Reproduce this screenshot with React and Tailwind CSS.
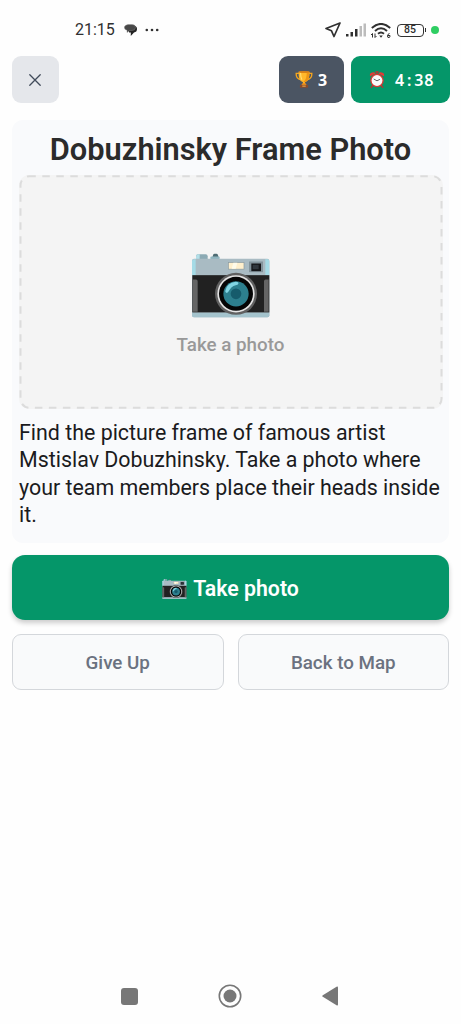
import React from 'react';
import clsx from 'clsx';

const CameraIcon = ({ className }) => (
  <svg viewBox="36 40 234 194" className={className} aria-hidden="true">
    <path d="M48 58v-9q0-6 6-6h23q6 0 6 6v9z" fill="#8caab4" />
    <path d="M48 50q0-7 7-7h4v15H48z" fill="#b3dfe8" />
    <path d="M96 56l3-10q1-4 5-4h5q4 0 5 4l3 10z" fill="#4d6b72" />
    <rect x="91" y="50" width="28" height="8" rx="3" fill="#8fb5bf" />
    <rect x="36" y="57" width="232" height="175" rx="6" fill="#a9bbc3" />
    <path d="M42 58h5v48H36V64q0-6 6-6zM262 58h-6v48h12V64q0-6-6-6z" fill="#a5dbe6" />
    <rect x="37" y="106" width="231" height="112" fill="#212121" />
    <path d="M36 219h232v8q0 5-5 5H41q-5 0-5-5z" fill="#a4c3cc" />
    <path d="M38 119h10q5 0 5 5v92H38zM266 119h-9q-5 0-5 5v92h14z" fill="#656565" />
    <rect x="145" y="68" width="47" height="20" fill="#fff0cd" stroke="#8a9aa0" strokeWidth="2" />
    <path d="M160 69h12l-5 18h-12z" fill="#fffbea" />
    <rect x="207" y="65" width="42" height="32" fill="#82939b" />
    <rect x="214" y="71" width="29" height="23" fill="#15171a" />
    <path d="M218 75h18v13h-18z" fill="#30373d" />
    <circle cx="168" cy="162" r="63" fill="#606060" />
    <circle cx="168" cy="162" r="56" fill="#e4e4e4" />
    <circle cx="168" cy="162" r="51" fill="#050505" />
    <circle cx="168" cy="162" r="38" fill="#2d7f8e" />
    <circle cx="168" cy="162" r="16" fill="#165b6c" />
    <path d="M136 153q5-24 31-27 10 0 8 6-1 4-8 4-14 4-20 17-3 7-8 6-4-1-3-6z" fill="#81d4e2" />
  </svg>
);

const TrophyIcon = () => (
  <svg viewBox="0 0 52 50" className="h-[17px] w-[18px] shrink-0" aria-hidden="true">
    <path d="M11 7H3q-1 16 14 19M41 7h8q1 16-14 19" fill="none" stroke="#f5a51d" strokeWidth="4" />
    <path d="M10 2h32q1 27-13 31v9h-6v-9Q9 29 10 2z" fill="#ffb82a" />
    <path d="M34 3h8q1 25-13 30-3 0-5-1 11-7 10-29z" fill="#ec9514" />
    <path d="M16 6q0 14 4 20" fill="none" stroke="#ffe27a" strokeWidth="3" />
    <ellipse cx="26" cy="3" rx="16" ry="3" fill="#d98216" />
    <path d="M21 36h10l3 6H18z" fill="#e88b1b" />
    <path d="M14 41h24v8H14z" fill="#8c4a28" />
    <path d="M21 43h10v3H21z" fill="#f0b24c" />
  </svg>
);

const AlarmClockIcon = () => (
  <svg viewBox="0 0 48 52" className="h-[17px] w-4 shrink-0" aria-hidden="true">
    <path d="M11 43l-4 7M37 43l4 7" stroke="#a83b35" strokeWidth="5" strokeLinecap="round" />
    <path d="M19 1h10v4H19zM22 3h4v7h-4z" fill="#bd3430" />
    <path d="M3 16Q0 8 7 5q8-4 13 3zM45 16q3-8-4-11-8-4-13 3z" fill="#e33a36" />
    <circle cx="24" cy="29" r="20.5" fill="#d83934" />
    <circle cx="24" cy="29" r="16.5" fill="#fafafa" />
    <path d="M15 25l9 5 8-4" fill="none" stroke="#424242" strokeWidth="2.5" strokeLinecap="round" strokeLinejoin="round" />
  </svg>
);

const StatusBar = () => (
  <div className="flex h-14 items-center pt-1 pr-[22px] pl-[75px] text-[#303030]">
    <span className="w-10 text-base leading-5">21:15</span>
    <svg viewBox="0 0 13 12" className="ml-[9px] h-3 w-[13px]" aria-hidden="true">
      <path d="M5 1.500h4q4 0 4 3.500 0 3-3 3.500L6.800 12V8.500H5z" fill="#222" />
      <path d="M4 .5h4Q11.500.5 11.500 3.500T8 6.500L5.500 6.700 3 8.500V6.300Q.3 5.700.3 3.500T4 .5z" fill="#484848" stroke="#8a8a8a" strokeWidth=".4" />
    </svg>
    <svg viewBox="0 0 15 4" className="ml-[8px] h-1 w-[15px]" fill="currentColor" aria-hidden="true">
      <circle cx="1.800" cy="2" r="1.300" />
      <circle cx="7" cy="2" r="1.300" />
      <circle cx="12.200" cy="2" r="1.300" />
    </svg>

    <div className="ml-auto flex items-center">
      {/* Location arrow */}
      <svg viewBox="0 0 16 16" className="h-4 w-4" fill="none" stroke="currentColor" strokeWidth="1.700" strokeLinejoin="round" aria-hidden="true">
        <path d="M15 1L1 6.500 6.500 8.800 9 14.500z" />
      </svg>
      {/* Mobile signal */}
      <svg viewBox="0 0 20 14" className="ml-[5px] h-3.5 w-5" aria-hidden="true">
        <path d="M0 11h2.500v2.500H0zM4.500 9H7v4.500H4.500zM9 6h2.500v7.500H9z" fill="#303030" />
        <path d="M13.500 3H16v10.500h-2.500zM17.500 0.500H20v13h-2.500z" fill="#bcbcbc" />
      </svg>
      {/* Wi-Fi 6 with data arrows */}
      <svg viewBox="0 0 20 15" className="ml-[5px] h-[15px] w-5" fill="none" stroke="currentColor" strokeWidth="1.900" aria-hidden="true">
        <path d="M.8 5Q10-3.200 19.200 5M4 8q6-5.500 12 0M7 10.800q3-2.600 6 0" />
        <path d="M8.200 12.500h3.600L10 14.800z" fill="currentColor" stroke="none" />
        <path d="M1.500 14.500v-4L0 12M4 10.500v4L5.500 13M18.500 10.500q-2 .5-2 2.500t1.500 1.500 1-2h-2" strokeWidth="1" />
      </svg>
      <div className="ml-[6px] flex h-[13px] w-[27px] items-center justify-center rounded-[4px] border border-[#303030]">
        <span className="pt-px text-[10.5px] leading-none font-medium">85</span>
      </div>
      <span className="ml-px h-1 w-[1.5px] bg-[#303030]" />
      <span className="ml-[5px] h-2 w-2 rounded-full bg-[#2fce63]" />
    </div>
  </div>
);

const Badge = ({ className, children }) => (
  <div className={clsx('flex h-[47px] items-center rounded-[9px] text-base text-white', className)}>
    {children}
  </div>
);

const Header = () => (
  <header className="flex items-start justify-between pr-[11px] pl-3">
    <button type="button" aria-label="Close" className="flex h-[47px] w-[47px] items-center justify-center rounded-[9px] bg-[#e5e7eb] pt-px pr-px text-[#414b5a]">
      <svg viewBox="0 0 12 12" className="h-3 w-3" fill="none" stroke="currentColor" strokeWidth="1.300" strokeLinecap="round" aria-hidden="true">
        <path d="M.8.800l10.400 10.400M11.200.800L.8 11.200" />
      </svg>
    </button>
    <div className="flex gap-[7px]">
      <Badge className="w-[65px] bg-[#4b5563] pl-4 font-['Noto_Sans',sans-serif] font-bold">
        <TrophyIcon />
        <span className="ml-[5px]">3</span>
      </Badge>
      <Badge className="w-[99px] bg-[#059669] pl-[18px] font-['Noto_Sans',sans-serif] font-semibold">
        <AlarmClockIcon />
        <span className="ml-[10px] tracking-[0.7px]">
          4<span className="inline-block w-[9.5px] text-center">:</span>38
        </span>
      </Badge>
    </div>
  </header>
);

const TaskCard = () => (
  <section className="mx-3 mt-[17px] h-[423px] rounded-[11px] bg-[#f9fafc] px-[7px] pt-[10px]">
    <h1 className="pt-px text-center text-[30.8px] leading-[37px] font-semibold whitespace-nowrap text-[#2b2b2b]">
      Dobuzhinsky Frame Photo
    </h1>
    <div className="relative mt-[7px] -mr-px flex h-[234px] flex-col items-center rounded-[10px] bg-[#f4f4f4] pt-[78px] pr-px">
      {/* CSS dashes can't be spaced, so the outline is stroked */}
      <svg className="absolute inset-0 h-full w-full" viewBox="0 0 424 234" aria-hidden="true">
        <rect x="1.500" y="1.200" width="421" height="231.600" rx="9" fill="none" stroke="#dcdcdc" strokeWidth="2" strokeDasharray="7.500 6.500" strokeDashoffset="1.200" />
      </svg>
      <CameraIcon className="h-[65px] w-[78px]" />
      <span className="mt-[15px] text-[18.8px] leading-6 font-medium text-[#999]">Take a photo</span>
    </div>
    <p className="mt-[10px] text-[21.4px] leading-[27.4px] whitespace-nowrap text-[#1b1b1d]">
      Find the picture frame of famous artist
      <br />
      Mstislav Dobuzhinsky. Take a photo where
      <br />
      your team members place their heads inside
      <br />
      it.
    </p>
  </section>
);

const Actions = () => (
  <div className="mt-3 px-3">
    <button type="button" className="flex h-[65px] w-full items-center justify-center gap-[6px] rounded-[13px] bg-[#059669] pt-0.5 text-[21.3px] font-semibold text-white shadow-[0_3px_5px_rgba(0,0,0,0.2)]">
      <CameraIcon className="h-5 w-[25px]" />
      <span>Take photo</span>
    </button>
    <div className="mt-[14px] grid grid-cols-2 gap-[14px]">
      {['Give Up', 'Back to Map'].map((label) => (
        <button
          key={label}
          type="button"
          className="h-14 rounded-[9px] border border-[#d4d7db] bg-[#f9fafb] pt-0.5 text-[18.8px] font-medium text-[#6b7280]"
        >
          {label}
        </button>
      ))}
    </div>
  </div>
);

const NavigationBar = () => (
  <nav className="mt-auto flex h-14 items-center justify-between pr-[123px] pl-[121px] text-[#777]">
    <span className="h-[17px] w-[17px] rounded-[3px] bg-[#777]" />
    <svg viewBox="0 0 24 24" className="h-6 w-6" aria-hidden="true">
      <circle cx="12" cy="12" r="10.700" fill="none" stroke="currentColor" strokeWidth="1.600" />
      <circle cx="12" cy="12" r="6.500" fill="currentColor" />
    </svg>
    <svg viewBox="0 0 16 20" className="h-5 w-4" fill="currentColor" aria-hidden="true">
      <path d="M.8 9.200L14.500.800Q16 0 16 1.600v16.800q0 1.600-1.500.800L.8 10.800q-1.200-.8 0-1.600z" />
    </svg>
  </nav>
);

const App = () => {
  return (
    <div className="flex h-screen flex-col overflow-hidden bg-[#fefefe] font-[Roboto,sans-serif]">
      <StatusBar />
      <Header />
      <TaskCard />
      <Actions />
      <NavigationBar />
    </div>
  );
};

export default App;
